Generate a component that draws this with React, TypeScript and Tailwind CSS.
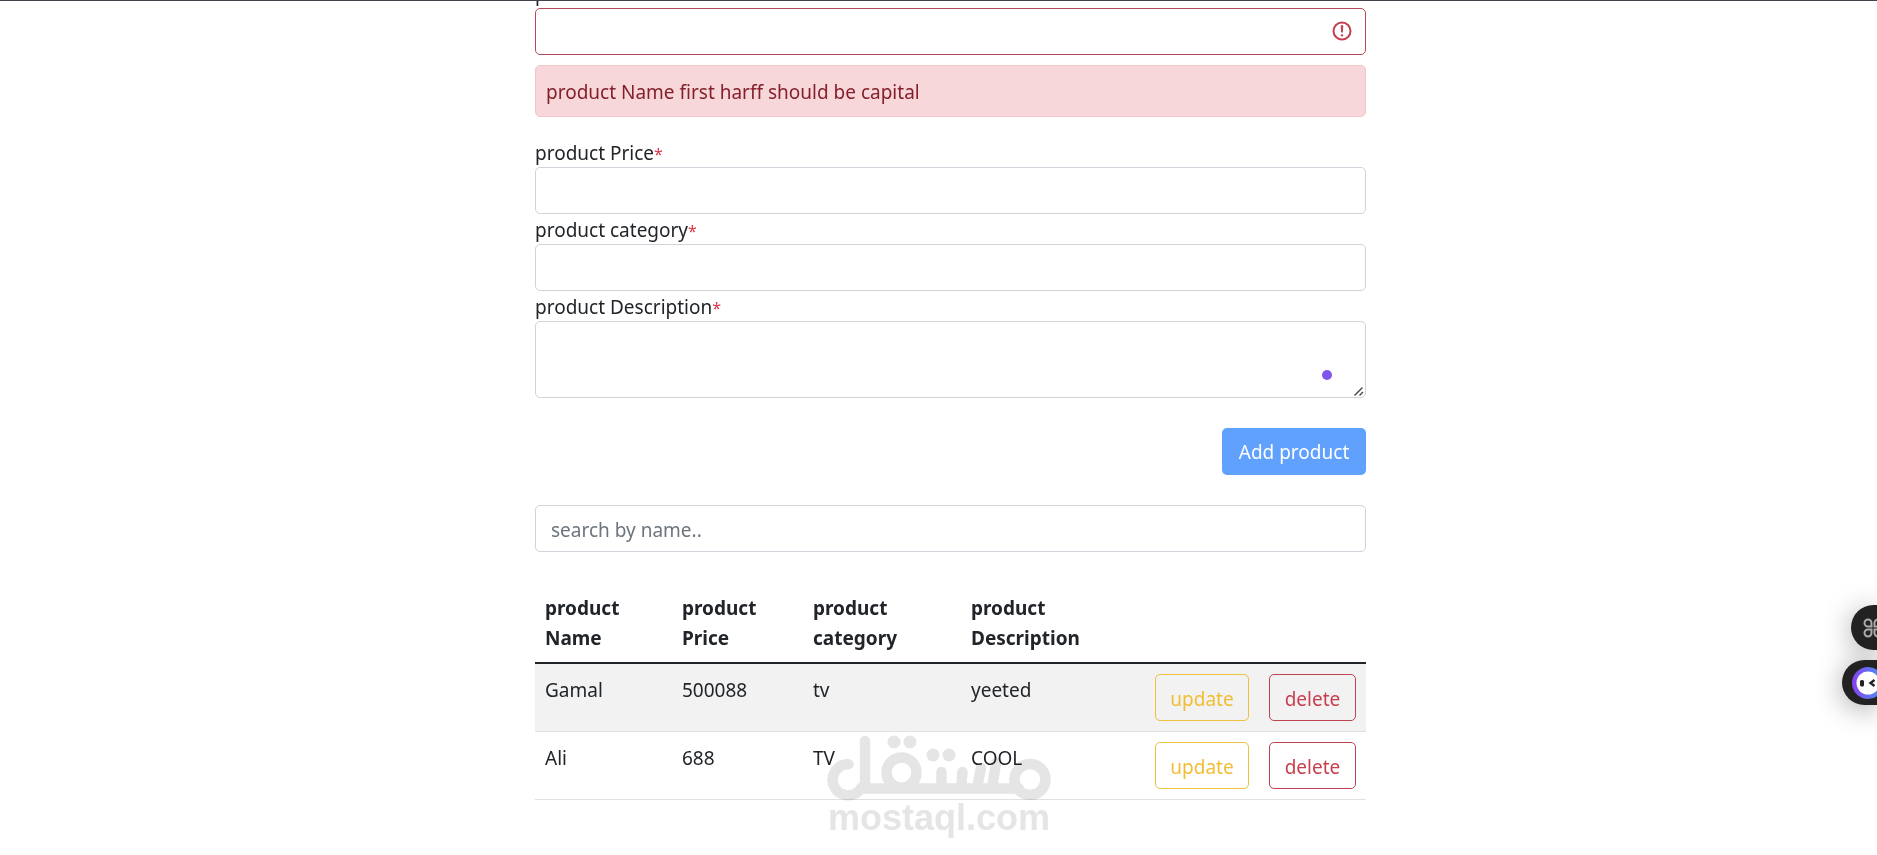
import type { ReactNode } from 'react';

interface Product {
  name: string;
  price: string;
  category: string;
  description: string;
}

const products: Product[] = [
  { name: 'Gamal', price: '500088', category: 'tv', description: 'yeeted' },
  { name: 'Ali', price: '688', category: 'TV', description: 'COOL' },
];

const controlClass =
  'block w-full rounded-[5px] border bg-white px-[15px] pt-0.5 outline-none placeholder:text-[#6c757d]';

const cellClass = 'px-2.5 pb-[9px] pt-[11px]';

interface FieldLabelProps {
  htmlFor: string;
  children: ReactNode;
}

function FieldLabel({ htmlFor, children }: FieldLabelProps) {
  return (
    <label htmlFor={htmlFor} className="block pt-0.5 leading-7">
      {children}
      <span className="text-base leading-none text-[#dc3545]">*</span>
    </label>
  );
}

function ProductForm() {
  return (
    <form>
      <FieldLabel htmlFor="name">product Name</FieldLabel>
      <div className="relative">
        <input id="name" type="text" aria-invalid="true" className={`${controlClass} h-[47px] border-[#b5495a]`} />
        <svg
          viewBox="0 0 12 12"
          className="absolute right-3.5 top-[13px] h-5 w-5"
          fill="none"
          stroke="#c2404f"
          aria-hidden="true"
        >
          <circle cx="6" cy="6" r="5.1" strokeWidth="1.2" />
          <path d="M5.5 2.800h1L6.200 6.700h-.4z" fill="#c2404f" strokeWidth="0.6" strokeLinejoin="round" />
          <circle cx="6" cy="8.600" r="0.700" fill="#c2404f" stroke="none" />
        </svg>
      </div>
      <div
        role="alert"
        className="mb-5 mt-2.5 rounded-[5px] border border-[#f1c6ca] bg-[#f7d7da] px-2.5 pb-[9px] pt-[11px] leading-[30px] text-[#842029]"
      >
        product Name first harff should be capital
      </div>
      <FieldLabel htmlFor="price">product Price</FieldLabel>
      <input id="price" type="text" className={`${controlClass} h-[47px] border-[#ced4da]`} />
      <FieldLabel htmlFor="category">product category</FieldLabel>
      <input id="category" type="text" className={`${controlClass} h-[47px] border-[#ced4da]`} />
      <FieldLabel htmlFor="description">product Description</FieldLabel>
      <div className="relative">
        <textarea id="description" className={`${controlClass} h-[77px] resize-none border-[#ced4da]`} />
        <span className="absolute bottom-[18px] right-[34px] h-2.5 w-2.5 rounded-full bg-[#7f56ea]" />
        <svg
          viewBox="0 0 10 10"
          className="absolute bottom-0.5 right-0.5 h-2.5 w-2.5"
          stroke="#444"
          strokeWidth="1.400"
          aria-hidden="true"
        >
          <path d="M0.500 9.500l8-8M5.500 9.500l3.500-3.500" />
        </svg>
      </div>
      <div className="my-[30px] flex justify-end">
        <button type="button" className="h-[47px] w-36 rounded-[5px] bg-[#61a1fe] pt-0.5 text-white">
          Add product
        </button>
      </div>
    </form>
  );
}

function ProductTable() {
  return (
    <table className="mt-[30px] w-full table-fixed border-collapse text-left leading-[30px]">
      <colgroup>
        <col className="w-[137px]" />
        <col className="w-[131px]" />
        <col className="w-[158px]" />
        <col />
        <col className="w-[114px]" />
        <col className="w-[107px]" />
      </colgroup>
      <thead>
        <tr className="border-b-2 border-[#212529] align-bottom">
          <th className={cellClass}>product<br />Name</th>
          <th className={cellClass}>product<br />Price</th>
          <th className={cellClass}>product<br />category</th>
          <th className={cellClass}>product<br />Description</th>
          <th className={cellClass} />
          <th className={cellClass} />
        </tr>
      </thead>
      <tbody>
        {products.map((product) => (
          <tr key={product.name} className="border-b border-[#dee2e6] align-top odd:bg-[#f2f2f2]">
            <td className={cellClass}>{product.name}</td>
            <td className={cellClass}>{product.price}</td>
            <td className={cellClass}>{product.category}</td>
            <td className={cellClass}>{product.description}</td>
            <td className="p-2.5">
              <button
                type="button"
                className="block h-[47px] w-full rounded-[5px] border border-[#eec23c] pt-0.5 text-[#f0bd33]"
              >
                update
              </button>
            </td>
            <td className="p-2.5">
              <button
                type="button"
                className="block h-[47px] w-full rounded-[5px] border border-[#bf4352] pt-0.5 text-[#c8404f]"
              >
                delete
              </button>
            </td>
          </tr>
        ))}
      </tbody>
    </table>
  );
}

function Watermark() {
  return (
    <svg
      viewBox="0 0 224 104"
      className="pointer-events-none absolute bottom-4 left-1/2 h-[104px] w-56 -translate-x-1/2 mix-blend-multiply"
      aria-label="mostaql.com"
    >
      <g fill="none" stroke="#e5e5e5" strokeWidth="10.500" strokeLinecap="round">
        <path d="M21.500 29.300A15.500 15.500 0 1 0 34 53.500H192M38 6V53" />
        <circle cx="74.500" cy="37.500" r="15" />
        <path d="M114.500 53V37M134 53L135.500 37M150 53L154 33M165 53L169 28" />
        <circle cx="203" cy="44.500" r="15.500" />
      </g>
      <g fill="#e5e5e5">
        <circle cx="67" cy="7" r="6.500" />
        <circle cx="83" cy="7" r="6.500" />
        <circle cx="106" cy="20" r="6.500" />
        <circle cx="122" cy="20" r="6.500" />
        <text x="112" y="95" textAnchor="middle" fontSize="36" fontWeight="700" fontFamily="Liberation Sans, sans-serif">
          mostaql.com
        </text>
      </g>
    </svg>
  );
}

function FloatingTools() {
  return (
    <div className="absolute right-0 top-[605px] flex flex-col items-end gap-2.5">
      <button
        type="button"
        aria-label="Shortcuts"
        className="flex h-[45px] w-[26px] items-center overflow-hidden rounded-l-full bg-[#222] pl-3 shadow-[0_4px_28px_rgba(0,0,0,0.35)]"
      >
        <svg viewBox="0 0 20 20" className="h-5 w-5 shrink-0" fill="none" stroke="#aaa" strokeWidth="2" aria-hidden="true">
          <path d="M5 1.500a3.500 3.500 0 0 1 3.500 3.500v3.500H5a3.500 3.500 0 0 1 0-7zM15 1.500A3.500 3.500 0 0 0 11.500 5v3.500H15a3.500 3.500 0 0 0 0-7zM5 18.500A3.500 3.500 0 0 0 8.500 15v-3.500H5a3.500 3.500 0 0 0 0 7zM15 18.500a3.500 3.500 0 0 1-3.500-3.500v-3.500H15a3.500 3.500 0 0 1 0 7z" />
        </svg>
      </button>
      <button
        type="button"
        aria-label="Assistant"
        className="flex h-[45px] w-[35px] items-center overflow-hidden rounded-l-full bg-[#222] pl-2.5 shadow-[0_4px_28px_rgba(0,0,0,0.35)]"
      >
        <svg viewBox="0 0 32 32" className="h-8 w-8 shrink-0" aria-hidden="true">
          <defs>
            <linearGradient id="ring" x1="0" x2="1">
              <stop offset="0" stopColor="#8a3ff0" />
              <stop offset="1" stopColor="#3f9bf5" />
            </linearGradient>
          </defs>
          <circle cx="16" cy="16" r="16" fill="url(#ring)" />
          <circle cx="16" cy="16" r="11.500" fill="#fff" />
          <rect x="8" y="13" width="4" height="6.500" rx="1.500" fill="#222" />
          <path d="M22.500 13l-4 3 4 3" fill="none" stroke="#222" strokeWidth="2.400" />
        </svg>
      </button>
    </div>
  );
}

export default function App() {
  return (
    <div className="relative min-h-screen overflow-hidden bg-white pl-6 font-['Noto_Sans','Open_Sans',sans-serif] text-[19px] text-[#212529]">
      <div className="absolute inset-x-0 top-0 z-10 h-px bg-[#40444b]" />
      <main className="mx-auto -mt-[22px] max-w-[831px]">
        <ProductForm />
        <input
          type="search"
          aria-label="search by name"
          placeholder="search by name.."
          className={`${controlClass} h-[47px] border-[#ced4da]`}
        />
        <ProductTable />
      </main>
      <Watermark />
      <FloatingTools />
    </div>
  );
}
